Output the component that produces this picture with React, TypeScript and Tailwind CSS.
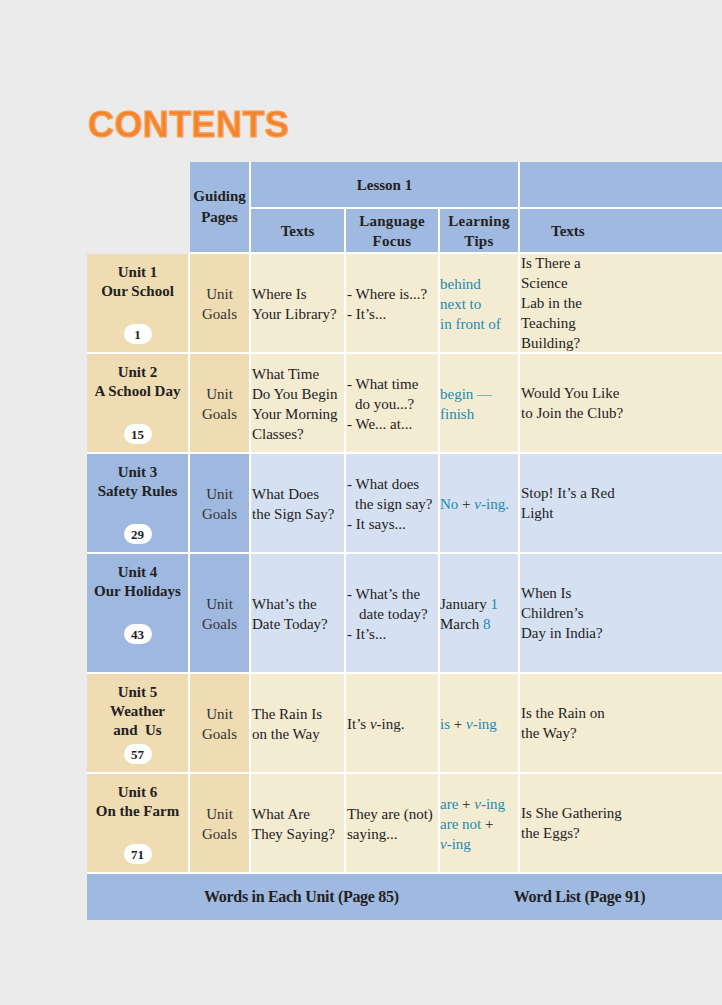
import React from 'react';

const serif = { fontFamily: '"Liberation Serif", "Times New Roman", serif' };

const T = ({ children }: { children: React.ReactNode }) => <span className="text-[#1b8bb0]">{children}</span>;
const V = () => <i>v</i>;

type Row = {
	unit: string;
	title: string[];
	page: string;
	blue: boolean;
	texts: React.ReactNode[];
	focus: React.ReactNode[];
	tips: React.ReactNode[];
	texts2: React.ReactNode[];
};

const rows: Row[] = [
	{
		unit: 'Unit 1',
		title: ['Our School'],
		page: '1',
		blue: false,
		texts: ['Where Is', 'Your Library?'],
		focus: ['- Where is...?', '- It’s...'],
		tips: [<T>behind</T>, <T>next to</T>, <T>in front of</T>],
		texts2: ['Is There a', 'Science', 'Lab in the', 'Teaching', 'Building?'],
	},
	{
		unit: 'Unit 2',
		title: ['A School Day'],
		page: '15',
		blue: false,
		texts: ['What Time', 'Do You Begin', 'Your Morning', 'Classes?'],
		focus: ['- What time', <span className="pl-[8px]">do you...?</span>, '- We... at...'],
		tips: [<T>begin —</T>, <T>finish</T>],
		texts2: ['Would You Like', 'to Join the Club?'],
	},
	{
		unit: 'Unit 3',
		title: ['Safety Rules'],
		page: '29',
		blue: true,
		texts: ['What Does', 'the Sign Say?'],
		focus: ['- What does', <span className="pl-[8px]">the sign say?</span>, '- It says...'],
		tips: [
			<span>
				<T>No</T> + <T><V />-ing.</T>
			</span>,
		],
		texts2: ['Stop! It’s a Red', 'Light'],
	},
	{
		unit: 'Unit 4',
		title: ['Our Holidays'],
		page: '43',
		blue: true,
		texts: ['What’s the', 'Date Today?'],
		focus: ['- What’s the', <span className="pl-[12px]">date today?</span>, '- It’s...'],
		tips: [
			<span>
				January <T>1</T>
			</span>,
			<span>
				March <T>8</T>
			</span>,
		],
		texts2: ['When Is', 'Children’s', 'Day in India?'],
	},
	{
		unit: 'Unit 5',
		title: ['Weather', 'and  Us'],
		page: '57',
		blue: false,
		texts: ['The Rain Is', 'on the Way'],
		focus: [
			<span>
				It’s <V />-ing.
			</span>,
		],
		tips: [
			<span>
				<T>is</T> + <T><V />-ing</T>
			</span>,
		],
		texts2: ['Is the Rain on', 'the Way?'],
	},
	{
		unit: 'Unit 6',
		title: ['On the Farm'],
		page: '71',
		blue: false,
		texts: ['What Are', 'They Saying?'],
		focus: ['They are (not)', 'saying...'],
		tips: [
			<span>
				<T>are</T> + <T><V />-ing</T>
			</span>,
			<span>
				<T>are not</T> +
			</span>,
			<T><V />-ing</T>,
		],
		texts2: ['Is She Gathering', 'the Eggs?'],
	},
];

const Lines = ({ lines }: { lines: React.ReactNode[] }) => (
	<div>
		{lines.map((l, i) => (
			<div key={i} className="whitespace-pre">
				{l}
			</div>
		))}
	</div>
);

const App = () => {
	return (
		<div className="min-h-[1005px] w-full overflow-hidden bg-[#ebebeb] text-[#222]" style={serif}>
			<div className="pl-[88px] pt-[105px]">
				<h1
					className="text-[36px] font-bold leading-[40px] tracking-[0.4px] text-[#f5822c]"
					style={{
						fontFamily: '"Liberation Sans", Arial, sans-serif',
						WebkitTextStroke: '1.2px #f7a35c',
						textShadow: '0 0 2px #fcd9b4',
					}}
				>
					CONTENTS
				</h1>
			</div>

			<div className="mt-[17px] pl-[87px]">
				<div className="grid grid-cols-[101px_59px_93px_92px_78px_1fr] grid-rows-[45px_43px_98px_98px_98px_118px_98px_98px_46px] gap-[2px] bg-white text-[15px] leading-[20px]">
					{/* header */}
					<div className="row-span-2 -mb-[2px] -mr-[2px] bg-[#ebebeb]" />
					<div className="row-span-2 flex flex-col items-center justify-center bg-[#a0b9e0] font-bold leading-[21px]">
						<div>Guiding</div>
						<div>Pages</div>
					</div>
					<div className="col-span-3 flex items-center justify-center bg-[#a0b9e0] font-bold">Lesson 1</div>
					<div className="bg-[#a0b9e0]" />
					<div className="flex items-center justify-center bg-[#a0b9e0] font-bold">Texts</div>
					<div className="flex flex-col items-center justify-center bg-[#a0b9e0] font-bold tracking-[0.3px]">
						<div>Language</div>
						<div>Focus</div>
					</div>
					<div className="flex flex-col items-center justify-center bg-[#a0b9e0] font-bold tracking-[0.3px]">
						<div>Learning</div>
						<div>Tips</div>
					</div>
					<div className="flex items-center bg-[#a0b9e0] pl-[31px] font-bold">Texts</div>

					{/* units */}
					{rows.map(r => {
						const side = r.blue ? 'bg-[#9fb8df]' : 'bg-[#efdcb2]';
						const cell = r.blue ? 'bg-[#d5e0f1]' : 'bg-[#f4ebd3]';
						return (
							<React.Fragment key={r.unit}>
								<div className={`${side} flex flex-col items-center pt-[9px] font-bold leading-[19px]`}>
									<div className="flex h-[57px] flex-col items-center">
										<div>{r.unit}</div>
										{r.title.map(t => (
											<div key={t} className="whitespace-pre">
												{t}
											</div>
										))}
									</div>
									<div className="mt-[4px] flex h-[20px] w-[28px] items-center justify-center rounded-full bg-white text-[13px]">
										{r.page}
									</div>
								</div>
								<div className={`${side} flex flex-col items-center justify-center pt-[2px] text-[#333]`}>
									<div>Unit</div>
									<div>Goals</div>
								</div>
								<div className={`${cell} flex items-center pl-[1px] pt-[2px]`}>
									<Lines lines={r.texts} />
								</div>
								<div className={`${cell} flex items-center pl-[1px] pt-[2px]`}>
									<Lines lines={r.focus} />
								</div>
								<div className={`${cell} flex items-center pt-[2px]`}>
									<Lines lines={r.tips} />
								</div>
								<div className={`${cell} flex items-center overflow-hidden pl-[1px]`}>
									<Lines lines={r.texts2} />
								</div>
							</React.Fragment>
						);
					})}

					<div className="col-span-6 flex items-center gap-[115px] bg-[#a0b9e0] pl-[117px] text-[16px] font-bold tracking-[-0.3px]">
						<span>Words in Each Unit (Page 85)</span>
						<span>Word List (Page 91)</span>
					</div>
				</div>
			</div>
		</div>
	);
};

export default App;
